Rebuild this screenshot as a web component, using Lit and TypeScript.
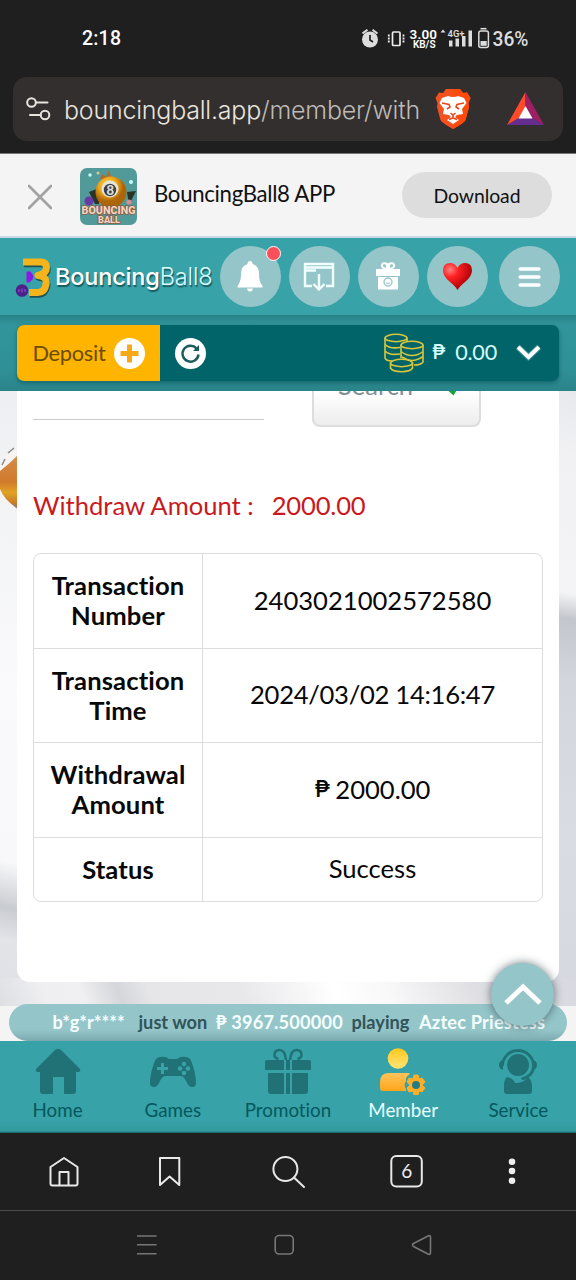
import { LitElement, html, css, svg } from "lit";
import { customElement } from "lit/decorators.js";
import { classMap } from "lit/directives/class-map.js";

@customElement("phone-top")
class PhoneTop extends LitElement {
  static styles = css`
    :host { display: block; height: 153px; background: #1f1f1f; color: #eee; font-family: Inter, sans-serif; }
    .status { height: 77px; box-sizing: border-box; padding: 0 44px 0 82px; display: flex; align-items: center; justify-content: space-between; }
    .time { font: 500 19.500px/24px Roboto, sans-serif; letter-spacing: 0.2px; color: #fff; }
    .icons { display: block; }
    .url { height: 64px; margin: 0 13px; box-sizing: border-box; padding: 0 19px 0 12px; border-radius: 14px; background: #322f2e; display: flex; align-items: center; }
    .address { width: 357px; margin-left: 13px; padding-top: 2px; white-space: nowrap; font: 300 25px/34px Inter, sans-serif; letter-spacing: -0.22px; color: #bdbab6; }
    .host { color: #e9e4de; }
    .lion { margin-left: 14px; display: block; }
    .bat { margin-left: auto; display: block; }
  `;
  render() {
    return html`
      <div class="status">
        <span class="time">2:18</span>
        <svg class="icons" width="170" height="24" viewBox="362 27 170 24" fill="#ddd">
          <circle cx="370" cy="39.500" r="8"/>
          <path d="M362.500 33.500l5-3.800M377.500 33.500l-5-3.800" stroke="#ddd" stroke-width="2"/>
          <path d="M370 35v5l3 2" fill="none" stroke="#1f1f1f" stroke-width="1.700"/>
          <rect x="392.500" y="32" width="7.500" height="13.500" rx="1" fill="none" stroke="#eee" stroke-width="1.700"/>
          <path d="M388.800 34.500v8M403.500 34.500v8" stroke="#eee" stroke-width="1.800" stroke-dasharray="2 1"/>
          <text x="409.500" y="39" font-family="Roboto" font-weight="600" font-size="13.500" textLength="27.500" fill="#fff">3.00</text>
          <text x="413" y="48.300" font-family="Roboto" font-weight="600" font-size="10" textLength="22.500" fill="#fff">KB/S</text>
          <path d="M440.500 32.500l2.500-3 2.500 3z"/>
          <text x="447.500" y="36.500" font-family="Roboto" font-weight="600" font-size="9" textLength="17" lengthAdjust="spacingAndGlyphs">4G+</text>
          <path d="M449 40.500h3.500v6H449zM455.500 38.500h3.500v8h-3.500zM462 36h3.500v10.500H462zM468.500 30.500h3.500v16h-3.500z"/>
          <rect x="478.800" y="31" width="9.600" height="16.500" rx="2" fill="none" stroke="#ddd" stroke-width="1.500"/>
          <path d="M480.500 28.700h6" stroke="#ddd" stroke-width="1.600"/>
          <path d="M480.500 41h6.200v4.800h-6.200z"/>
          <text x="492.500" y="45.600" font-family="Roboto" font-weight="500" font-size="19.500" textLength="36" lengthAdjust="spacingAndGlyphs">36%</text>
        </svg>
      </div>
      <div class="url">
        <svg width="26" height="26" viewBox="0 0 26 26" fill="none" stroke="#e8e4de" stroke-width="2" stroke-linecap="round">
          <circle cx="6.500" cy="6.500" r="4.300"/><path d="M11.500 6.500h11"/>
          <circle cx="20" cy="19" r="4.300"/><path d="M5 19h10.500"/>
        </svg>
        <div class="address"><span class="host">bouncingball.app</span>/member/with</div>
        <svg class="lion" width="36" height="42" viewBox="0 0 36 42">
          <path d="M11 1h14l3 4 4-.5 3.500 5.500-2 5 .5 4-3.500 13Q29 35 18 41 7 35 5.500 32L2 19l.5-4-2-5L4 4.500 8 5z" fill="#f4511e"/>
          <path d="M18 1h7l3 4 4-.5 3.500 5.500-2 5 .5 4-3.500 13Q29 35 18 41z" fill="#ff4a0a"/>
          <path d="M13 8q5 2 10 0l6 2 2.500 5-4.500 6 1 5-6 1-2 2 4 3-6 4-6-4 4-3-2-2-6-1 1-5-4.500-6L7 10z" fill="#fff"/>
          <path d="M7 15l7 1.500 1 2.500-3 2M29 15l-7 1.500-1 2.500 3 2M15.500 25l2.500 2 2.500-2M18 27v3l-4 1.500M18 30l4 1.500" fill="none" stroke="#e8451b" stroke-width="1.600"/>
        </svg>
        <svg class="bat" width="37" height="34" viewBox="0 0 37 34">
          <path d="M18.500 0L0 33l12-7 6.500-11z" fill="#ff4b2b"/>
          <path d="M18.500 0L37 33l-12-7-6.500-11z" fill="#9e1f63"/>
          <path d="M0 33l12-7h13l12 7z" fill="#662d91"/>
          <path d="M18.500 14l-7 12.500h14z" fill="#fff"/>
        </svg>
      </div>`;
  }
}

@customElement("app-banner")
class AppBanner extends LitElement {
  static styles = css`
    :host { display: flex; align-items: center; height: 85px; box-sizing: border-box; padding: 2px 24px 0 28px; border-top: 1px solid #777; border-bottom: 2px solid #c9d8e2; background: #f4f4f4; font-family: Lato, sans-serif; color: #111; }
    .close { display: block; margin-top: 2px; }
    .logo { display: block; margin-left: 28px; border-radius: 7px; }
    .name { margin: 0 auto 4px 17px; font-size: 22.200px; line-height: 28px; letter-spacing: -0.31px; white-space: nowrap; }
    .download { width: 150px; height: 46px; margin-bottom: 3px; border-radius: 23px; background: #ddd; font-size: 19.400px; line-height: 48px; text-align: center; letter-spacing: -0.1px; }
  `;
  render() {
    return html`
      <svg class="close" width="24" height="26" viewBox="0 0 24 26"><path d="M1 2l22 22M23 2L1 24" stroke="#a2a2a2" stroke-width="2.700" stroke-linecap="round"/></svg>
      <svg class="logo" width="57" height="57" viewBox="0 0 57 57">
        <defs><radialGradient id="ball" cx=".4" cy=".3"><stop offset="0" stop-color="#ffe04a"/><stop offset=".6" stop-color="#e9a51b"/><stop offset="1" stop-color="#ac6509"/></radialGradient></defs>
        <rect width="57" height="57" fill="#529a99"/>
        <path d="M9 24l10-4v16h-4zM47 24l9-1-7 14z" fill="#2a3328"/>
        <path d="M20 11l2-5 4 3 3-7 2 7-1 4z" fill="#b56924"/>
        <circle cx="31" cy="24" r="15.500" fill="url(#ball)"/>
        <circle cx="30" cy="21" r="8.500" fill="#e5e5dc"/><circle cx="30" cy="22" r="6.200" fill="#3c4044"/>
        <text x="26.500" y="27" font-family="Lato" font-weight="900" font-size="13" fill="#ddd">8</text>
        <circle cx="9" cy="33" r="4.500" fill="#6939a5"/><circle cx="49" cy="34" r="2.500" fill="#de8b96"/>
        <circle cx="10" cy="7" r="1.700" fill="#c8fbff"/><circle cx="51" cy="14" r="2" fill="#c8fbff"/><circle cx="18" cy="5" r="1.500" fill="#e8c28e"/>
        <g font-family="Roboto" font-weight="800" stroke="#8a5a42" stroke-width="1.600" paint-order="stroke" fill="#f4d7c2">
          <text x="1.500" y="46" font-size="10.500" textLength="54" lengthAdjust="spacingAndGlyphs">BOUNCING</text>
          <text x="18" y="55" font-size="9" textLength="22" lengthAdjust="spacingAndGlyphs">BALL</text>
        </g>
      </svg>
      <span class="name">BouncingBall8 APP</span>
      <div class="download">Download</div>`;
  }
}

@customElement("site-header")
class SiteHeader extends LitElement {
  static styles = css`
    :host { display: block; height: 153px; color: #fff; font-family: Lato, sans-serif; }
    .top { height: 77px; box-sizing: border-box; padding-left: 14px; display: flex; align-items: center; background: #37a2a8; }
    .mark { display: block; }
    .brand { width: 164.500px; margin-left: 4px; white-space: nowrap; font: 500 23.500px/32px Inter, sans-serif; letter-spacing: -0.17px; text-shadow: 1px 2px 1px #19595f; }
    .thin { font-weight: 300; color: #d9fbff; }
    .round { position: relative; width: 61px; height: 61px; margin-right: 8px; border-radius: 50%; background: #94c5c8; display: grid; place-items: center; flex: none; }
    .wide { margin-right: 11px; }
    .dot { position: absolute; right: 0; top: 0; width: 13px; height: 13px; border: 1px solid #fff; border-radius: 50%; background: #f9505c; }
    .wallet { height: 76px; box-sizing: border-box; padding: 10px 17px; background: linear-gradient(#288287, #31959b 10px, #2f9197 70%, #2a8489); }
    .bar { height: 56px; display: flex; align-items: center; overflow: hidden; border-radius: 7px; background: #006468; box-shadow: 0 2px 4px #15676d; }
    .deposit { width: 143px; height: 56px; box-sizing: border-box; padding: 0 15px 0 15.500px; background: #ffb400; color: #6a4c07; display: flex; align-items: center; justify-content: space-between; font-size: 21.800px; letter-spacing: -0.3px; }
    .word { margin-top: -2px; }
    .refresh { margin-left: 15px; display: block; }
    .coins { margin-left: auto; display: block; }
    .money { width: 65px; margin: -3px 18px 0 8px; font-size: 21.600px; color: #d5fcff; white-space: nowrap; display: flex; align-items: center; justify-content: space-between; letter-spacing: -0.2px; }
    .peso { font: 500 20px/24px Inter, sans-serif; }
    .down { margin-right: 17px; display: block; }
  `;
  render() {
    return html`
      <div class="top">
        <svg class="mark" width="37" height="42" viewBox="14 254 37 42" fill="none" stroke-linejoin="round">
          <path d="M23 260.500h17.500q6 0 6 5.500 0 6-8.500 8 9.500 1 8 9-1.500 8-8 8h-9" stroke="#1b5357" stroke-width="7" transform="translate(.8 1.200)"/>
          <path d="M23 260h17.500q6 0 6 5.500 0 6-8.500 8 9.500 1 8 9-1.500 8-8 8h-9" stroke="#f6b41c" stroke-width="7"/>
          <path d="M26.500 269.500h4l3 4.500-1 3.500-3 3h-3z" fill="#8b19e6"/>
          <circle cx="22" cy="288.500" r="6.300" fill="#4d2189"/><path d="M19 287v3M22 286.500v4M25 287v3" stroke="#9159d9"/>
        </svg>
        <span class="brand">Bouncing<span class="thin">Ball8</span></span>
        <div class="round">
          <svg width="26" height="32" viewBox="0 0 26 32" fill="#fff"><path d="M13 0q2.500 0 2.500 3 6.500 2 6.500 10 0 8 3.500 12v1.500H.5V25Q4 21 4 13 4 5 10.500 3 10.500 0 13 0zM10 27.500h6q-.5 3-3 3t-3-3z"/></svg>
          <i class="dot"></i>
        </div>
        <div class="round">
          <svg width="32" height="30" viewBox="0 0 32 30" fill="none" stroke="#f2ffff" stroke-width="2.400"><path d="M9 24H2V2h28v22h-7M2 5.500h28M3 8.500h10"/><path d="M16 12v15M10.500 22l5.500 5.500 5.500-5.500"/></svg>
        </div>
        <div class="round">
          <svg width="26" height="29" viewBox="0 0 26 29"><path d="M1 7h24v7H1zM3 15h20v12.500H3z" fill="#fff"/><path d="M12 7Q6 6 7 3t5-1v5M14 7q6-1 5-4t-5-1v5" fill="none" stroke="#fff" stroke-width="2"/><circle cx="13" cy="20" r="4" fill="none" stroke="#94c5c8" stroke-width="1.300"/><path d="M11 20.500q2 2.500 4 0" fill="none" stroke="#94c5c8"/></svg>
        </div>
        <div class="round wide">
          <svg width="31" height="29" viewBox="0 0 31 29"><defs><radialGradient id="heart" cx=".25" cy=".25" r=".8"><stop offset="0" stop-color="#ff8380"/><stop offset=".35" stop-color="#ff2024"/><stop offset="1" stop-color="#a40004"/></radialGradient></defs><path d="M15.500 28Q14 25 8 20 1 14.500 1 8.500 1 1 8 1q5 0 7.500 5Q18 1 23 1q7 0 7 7.500 0 6-7 11.500-6 5-7.500 8z" fill="url(#heart)"/></svg>
        </div>
        <div class="round wide">
          <svg width="23" height="20" viewBox="0 0 23 20" stroke="#fff" stroke-width="3.300" stroke-linecap="round"><path d="M2 2h19M2 10h19M2 18h19"/></svg>
        </div>
      </div>
      <div class="wallet">
        <div class="bar">
          <div class="deposit"><span class="word">Deposit</span>
            <svg width="31" height="31" viewBox="0 0 31 31"><circle cx="15.500" cy="15.500" r="15.500" fill="#fff"/><path d="M15.500 6.500v18M6.500 15.500h18" stroke="#f6aa18" stroke-width="5"/></svg>
          </div>
          <svg class="refresh" width="31" height="31" viewBox="0 0 31 31"><circle cx="15.500" cy="15.500" r="15.500" fill="#fff"/><path d="M21.500 10.300a8 8 0 1 0 2 6.200" fill="none" stroke="#1c5c5e" stroke-width="2.500"/><path d="M24 7v6h-6z" fill="#1c5c5e"/></svg>
          <svg class="coins" width="40" height="40" viewBox="0 0 40 40" fill="none" stroke="#d8c63c" stroke-width="1.600"><ellipse cx="12" cy="5" rx="11" ry="3.700"/><path d="M1 5v20q1 3 7 3M1 11.500q4 4.500 15 3M1 18q4 4.500 15 3M23 5v4"/><ellipse cx="28" cy="12" rx="11" ry="3.700"/><path d="M17 12v13M39 12v17q-2 3-9 3M17 18.500q5 4 11 4t11-4M18 24q5 3.500 10 3.500t11-4"/><ellipse cx="17.500" cy="30" rx="11" ry="3.700" fill="#006468"/><path d="M6.500 30v5q2 3.700 11 3.700T28.500 35v-5"/></svg>
          <div class="money"><span class="peso">₱</span><span>0.00</span></div>
          <svg class="down" width="27" height="20" viewBox="0 0 27 20" fill="none"><path d="M3 4l10.500 10L24 4" stroke="#72b9bb" stroke-width="6" opacity=".5"/><path d="M3 4l10.500 10L24 4" stroke="#fff" stroke-width="4"/></svg>
        </div>
      </div>`;
  }
}

const ROWS = [
  { label: "Transaction Number", value: "2403021002572580" },
  { label: "Transaction Time", value: "2024/03/02 14:16:47", tight: true },
  { label: "Withdrawal Amount", value: "2000.00", money: true },
  { label: "Status", value: "Success" },
];

@customElement("record-page")
class RecordPage extends LitElement {
  static styles = css`
    :host { display: block; position: relative; height: 650px; overflow: hidden; font-family: Lato, sans-serif; font-variant-ligatures: none; color: #080808; background: #f3f3f4; }
    .backdrop { position: absolute; left: 0; top: 0; display: block; }
    .card { position: relative; height: 591px; margin: 0 17px; box-sizing: border-box; padding: 0 16px; border-radius: 0 0 13px 13px; background: #fff; }
    .filters { display: flex; justify-content: space-between; height: 36px; padding-right: 62px; align-items: flex-end; }
    .field { width: 231px; height: 28px; box-sizing: border-box; border-bottom: 1px solid #ccc; margin-bottom: 7px; }
    .search { width: 169px; height: 70px; box-sizing: border-box; padding: 12px 17px 0 24px; border: 2px solid #ddd; border-radius: 8px; background: linear-gradient(#fff 50%, #ededed); color: #829095; font-size: 25.500px; line-height: 28px; display: flex; justify-content: space-between; }
    .check { margin-top: 3px; }
    .total { display: flex; gap: 19px; margin-top: 61px; height: 34px; align-items: center; font-size: 25.600px; color: #c9191d; white-space: nowrap; }
    .figure { letter-spacing: -0.2px; margin-left: -1px; }
    .records { width: 510px; margin-top: 31px; border: 1.500px solid #ddd; border-radius: 8px; box-sizing: border-box; height: 349px; display: grid; grid-template-rows: 94.500px 94.500px 94.500px 1fr; font-size: 25.600px; line-height: 30px; text-align: center; }
    .row { display: grid; grid-template-columns: 169px 1fr; border-bottom: 1.500px solid #ddd; }
    .row:last-child { border-bottom: 0; }
    .label { padding: 0 10px 1px; display: grid; place-items: center; font-weight: 700; letter-spacing: 0.12px; border-right: 1.500px solid #ddd; }
    .value { padding-bottom: 2px; display: flex; justify-content: center; align-items: center; gap: 5px; }
    .tight { letter-spacing: -0.28px; }
    .peso { font: 500 23px/30px Inter, sans-serif; }
    .ticker { position: absolute; left: 9px; right: 9px; top: 613px; height: 37px; box-sizing: border-box; padding-left: 43.500px; border-radius: 19px; background: linear-gradient(#94c5c8 70%, #7babb0); color: #f4ffff; font-size: 18.200px; line-height: 37px; font-weight: 700; display: flex; white-space: nowrap; }
    .who { width: 86px; }
    .won { width: 77.500px; color: #31545a; }
    .sum { width: 135.500px; letter-spacing: 0.16px; }
    .play { width: 67.500px; color: #31545a; }
    .game { letter-spacing: 0.2px; }
    .up { position: absolute; left: 491px; top: 572px; width: 63px; height: 63px; border-radius: 50%; background: #94c5c8; box-shadow: 0 0 10px rgba(30, 50, 60, .65); display: grid; place-items: center; }
  `;
  render() {
    return html`
      <svg class="backdrop" width="576" height="650" viewBox="0 391 576 650">
        <defs>
          <linearGradient id="left" gradientUnits="userSpaceOnUse" x1="0" y1="391" x2="-150" y2="1006"><stop offset="0" stop-color="#eeeff2"/><stop offset=".45" stop-color="#fafafc"/><stop offset=".72" stop-color="#f8f8fa"/><stop offset=".79" stop-color="#c9ccd1"/><stop offset=".84" stop-color="#e3e4e8"/><stop offset="1" stop-color="#dcdde2"/></linearGradient>
          <linearGradient id="right" gradientUnits="userSpaceOnUse" x1="567" y1="391" x2="467" y2="1006"><stop offset="0" stop-color="#e8e9ed"/><stop offset=".1" stop-color="#f1f1f4"/><stop offset=".32" stop-color="#f4f4f6"/><stop offset=".36" stop-color="#c3c6cc"/><stop offset=".46" stop-color="#d3d6dd"/><stop offset=".7" stop-color="#dadce3"/><stop offset="1" stop-color="#d6d8e0"/></linearGradient>
          <linearGradient id="foot" gradientUnits="userSpaceOnUse" x1="0" y1="1006" x2="540" y2="800"><stop offset="0" stop-color="#dedfe3"/><stop offset=".08" stop-color="#efeff2"/><stop offset=".14" stop-color="#f0f0f2"/><stop offset=".2" stop-color="#d5d6da"/><stop offset=".25" stop-color="#e6e6e9"/><stop offset=".4" stop-color="#e8e7ea"/><stop offset=".55" stop-color="#fff"/><stop offset=".64" stop-color="#f8f8f9"/><stop offset=".78" stop-color="#dfdfe3"/><stop offset="1" stop-color="#d6d8e0"/></linearGradient>
          <linearGradient id="orange" x2="0" y2="1"><stop offset="0" stop-color="#d48b4a"/><stop offset=".5" stop-color="#d17a2c"/><stop offset=".7" stop-color="#e1a324"/><stop offset="1" stop-color="#bd6a2c"/></linearGradient>
        </defs>
        <rect y="391" width="30" height="600" fill="url(#left)"/>
        <rect x="546" y="391" width="30" height="600" fill="url(#right)"/>
        <rect y="978" width="576" height="28" fill="url(#foot)"/>
        <rect y="1006" width="576" height="35" fill="#f5f4f4"/>
        <path d="M0 470Q4 450 17 446v66Q5 505 0 494z" fill="#f6f3f0"/>
        <path d="M17 456v52Q4 500 0 489v-18Q8 465 17 456z" fill="url(#orange)"/>
        <path d="M2 465l3-6M8 453l6-5M13 504l4 4" stroke="#88898c" stroke-width="1.500"/>
      </svg>
      <div class="card">
        <div class="filters">
          <div class="field"></div>
          <div class="search"><span>Search</span><svg class="check" width="20" height="22" viewBox="0 0 20 22"><path d="M2 10l9 8 7-12" fill="none" stroke="#18a435" stroke-width="4.500"/></svg></div>
        </div>
        <div class="total"><span>Withdraw Amount :</span><span class="figure">2000.00</span></div>
        <div class="records">
          ${ROWS.map((r) => html`<div class="row"><div class="label">${r.label}</div><div class=${classMap({ value: true, tight: !!r.tight })}>${r.money ? html`<span class="peso">₱</span>` : null}<span>${r.value}</span></div></div>`)}
        </div>
      </div>
      <div class="ticker"><span class="who">b*g*r****</span><span class="won">just won</span><span class="sum">₱ 3967.500000</span><span class="play">playing</span><span class="game">Aztec Priestess</span></div>
      <div class="up"><svg width="40" height="24" viewBox="0 0 40 24"><path d="M3 20L20 4l17 16" fill="none" stroke="#fff" stroke-width="5"/></svg></div>`;
  }
}

const TABS = [
  { label: "Home", icon: svg`<path d="M24 1q2 0 3 1l19 19q1 3-2 3h-2v19q0 3-3 3h-8q-1 0-1-1V29H19v16q0 1-1 1h-9q-3 0-3-3V24H4q-3 0-2-3L21 2q1-1 3-1z"/>` },
  { label: "Games", icon: svg`<path d="M11 9q6-1 9 2h8q3-3 9-2 4 0 6 6 4 12 4 20 0 4-4 4-3 0-5-4-3-7-6-7H16q-3 0-6 7-2 4-5 4-4 0-4-4 0-8 4-20 2-6 6-6z"/><path d="M13.500 15v11M8 20.500h11" stroke="#37a2a8" stroke-width="3"/><g fill="#37a2a8"><circle cx="35" cy="16" r="2.200"/><circle cx="31" cy="20.500" r="2.200"/><circle cx="39" cy="20.500" r="2.200"/><circle cx="35" cy="25" r="2.200"/></g>` },
  { label: "Promotion", icon: svg`<path d="M3 12h17v10H1v-8q0-2 2-2zM28 12h17q2 0 2 2v8H28zM22 12h4v10h-4zM4 25h16v21H7q-3 0-3-3zM28 25h16v18q0 3-3 3H28zM22 25h4v21h-4z"/><path d="M22 12Q21 2 15.500 2q-5 0-5 5 0 3 4 4M26 12q1-10 6.500-10 5 0 5 5 0 3-4 4" fill="none" stroke="#207276" stroke-width="2.500"/>` },
  { label: "Member", icon: svg`<defs><linearGradient id="gold" x2="0" y2="1"><stop offset="0" stop-color="#ffc91c"/><stop offset="1" stop-color="#ffe477"/></linearGradient><linearGradient id="amber" x2="0" y2="1"><stop offset="0" stop-color="#ffc45a"/><stop offset="1" stop-color="#ffa51b"/></linearGradient></defs><circle cx="19" cy="10.500" r="10.300" fill="url(#gold)"/><path d="M10 25h18q3 0 3 1-5 3-4 7-3 4 0 8v2H4q-3 0-3-3v-6q0-9 9-9z" fill="url(#amber)"/><path d="M35 27h4l1 4 3-1 3 4-3 3 3 3-3 4-3-1-1 4h-4l-1-4-4 1-2-4 3-3-3-3 2-4 4 1z" fill="#ffae27" stroke="#ffae27" stroke-linejoin="round"/><circle cx="37" cy="37" r="4" fill="#247c83"/>` },
  { label: "Service", icon: svg`<circle cx="24" cy="17" r="11"/><path d="M8.500 18a15.500 15.500 0 0 1 31 0q0 10-12 13" fill="none" stroke="#207276" stroke-width="2.800"/><path d="M9 12q-4 1-4 5t4 5zM39 12q4 1 4 5t-4 5zM13 29q7 2 8 6 9 0 13-6 3 2 4 8v6q0 3-3 3H13q-3 0-3-3v-6q0-5 3-8z"/>` },
];

@customElement("site-tabs")
class SiteTabs extends LitElement {
  static styles = css`
    :host { display: grid; grid-template-columns: repeat(5, 1fr); height: 92px; background: linear-gradient(#37a2a8 85%, #319a9f 98%, #185b60); font-family: Lato, sans-serif; font-variant-ligatures: none; }
    .tab { display: flex; flex-direction: column; align-items: center; padding-top: 7px; color: #04585e; font-size: 18.800px; line-height: 24px; }
    .active { color: #eaffff; }
    .glyph { display: block; margin-bottom: 2.500px; fill: #207276; }
  `;
  render() {
    return html`${TABS.map((t) => html`<div class=${classMap({ tab: true, active: t.label === "Member" })}><svg class="glyph" width="48" height="47" viewBox="0 0 48 47">${t.icon}</svg><span>${t.label}</span></div>`)}`;
  }
}

@customElement("phone-bottom")
class PhoneBottom extends LitElement {
  static styles = css`
    :host { display: block; height: 147px; background: #1f1f1f; }
    .tools { height: 77px; border-bottom: 1px solid #4d4d4d; display: block; }
    .system { height: 69px; display: block; }
  `;
  render() {
    return html`
      <svg class="tools" width="576" height="77" viewBox="0 1133 576 77" fill="none" stroke="#e8e8e8" stroke-width="2" stroke-linejoin="round" stroke-linecap="round">
        <path d="M50.500 1167l13.500-9 13.500 9v16.500q0 2-2 2h-23q-2 0-2-2zM59.500 1185.500v-13.500h9v13.500"/>
        <path d="M160 1158h19.300v27l-9.700-8.500-9.600 8.500z"/>
        <circle cx="285.400" cy="1169" r="12"/><path d="M294.500 1178l9.500 9"/>
        <rect x="391.300" y="1156" width="30.500" height="30.500" rx="5"/>
        <text x="401.300" y="1177.500" font-family="Lato" font-size="19" fill="#eee" stroke="none">6</text>
        <g fill="#eee" stroke="none"><circle cx="512" cy="1161.700" r="3.300"/><circle cx="512" cy="1171" r="3.300"/><circle cx="512" cy="1180.700" r="3.300"/></g>
      </svg>
      <svg class="system" width="576" height="69" viewBox="0 1211 576 69" fill="none" stroke="#777" stroke-width="1.600" stroke-linejoin="round">
        <path d="M137 1236h19.500M137 1244.700h19.500M137 1253.700h19.500"/>
        <rect x="275.200" y="1235.500" width="18" height="18.500" rx="4"/>
        <path d="M413.500 1243.500l14.500-7.500q2.500-1 2.500 1v16q0 2-2.500 1l-14.500-7.500q-2-1.500 0-3z"/>
      </svg>`;
  }
}

@customElement("app-root")
class AppRoot extends LitElement {
  static styles = css`
    :host { display: block; width: 576px; height: 1280px; overflow: hidden; }
  `;
  render() {
    return html`<phone-top></phone-top><app-banner></app-banner><site-header></site-header><record-page></record-page><site-tabs></site-tabs><phone-bottom></phone-bottom>`;
  }
}
